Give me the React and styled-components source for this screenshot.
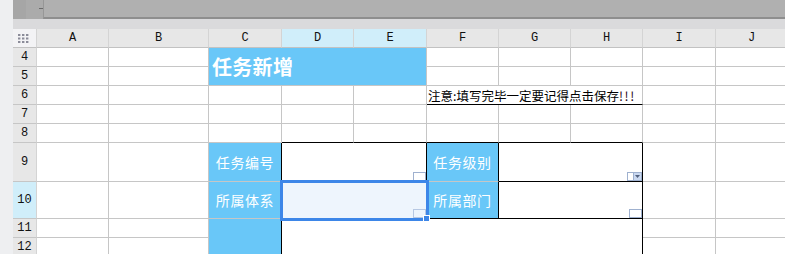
import React from 'react'
import styled, { createGlobalStyle } from 'styled-components'

const GRID = '#c6c6c6'
const INK = '#000'
const SKY = '#69c7f8'
const PICK = '#d0eefa'

const Global = createGlobalStyle`
  html, body { margin: 0; padding: 0; overflow: hidden; background: #fff; }
  body { font-family: "Noto Sans CJK SC", sans-serif; }
`

const Page = styled.div`
  display: flex;
  width: 785px;
  height: 254px;
  overflow: hidden;
`

const SideStrip = styled.div`
  width: 13px;
  flex: none;
  background: #eeeff1;
`

const Main = styled.div`
  flex: 1;
  display: flex;
  flex-direction: column;
  min-width: 0;
`

const TopBar = styled.div`
  height: 19px;
  flex: none;
  display: flex;
`

const NameBox = styled.div`
  width: 13px;
  background: #a6a6a6;
`

const FxButton = styled.div`
  width: 17px;
  background: #ababab;
  display: flex;
  justify-content: flex-end;
  padding-top: 8px;
  box-sizing: border-box;
  &::after {
    content: '';
    width: 4px;
    height: 1px;
    background: #6a6a6a;
  }
`

const FormulaBar = styled.div`
  flex: 1;
  background: #b0b0b0;
  border-left: 1px solid #979797;
  border-bottom: 2px solid #8e8e8e;
  box-sizing: border-box;
`

const Band = styled.div`
  height: 10px;
  flex: none;
  background: #dadadc;
`

const Sheet = styled.div`
  display: grid;
  grid-template-columns: 24px 72px 100px 73px 72px 73px 72px 72px 72px 73px 72px;
  grid-template-rows: 19px 19px 19px 19px 19px 19px 39px 37px 19px 19px;
`

const Cell = styled.div`
  grid-column: ${p => p.$c} / span ${p => p.$cs || 1};
  grid-row: ${p => p.$r} / span ${p => p.$rs || 1};
  box-sizing: border-box;
  border-right: 1px solid ${p => p.$rb || GRID};
  border-bottom: 1px solid ${p => p.$bb || GRID};
  background: #fff;
  min-width: 0;
`

const Corner = styled(Cell)`
  background: #f3f3f5;
  border-right-color: #d4d4d4;
  border-bottom-color: #c2c2c2;
  display: flex;
  align-items: center;
  padding-left: 5px;
`

const ColHead = styled(Cell)`
  background: ${p => (p.$on ? PICK : '#e7e7e7')};
  border-right-color: #d4d4d4;
  border-bottom-color: #c2c2c2;
  display: flex;
  align-items: center;
  justify-content: center;
  font-family: "Liberation Mono", "DejaVu Sans Mono", monospace;
  font-size: 12px;
  color: #111;
`

const RowHead = styled(ColHead)`
  border-bottom-color: ${GRID};
`

const TitleCell = styled(Cell)`
  background: ${SKY};
  color: #fff;
  font-size: 20px;
  font-weight: 700;
  display: flex;
  align-items: center;
  padding-left: 3px;
  letter-spacing: 0.3px;
`

const NoteCell = styled(Cell)`
  display: flex;
  align-items: flex-end;
  padding-left: 1px;
  font-size: 12.5px;
  line-height: 16px;
  white-space: nowrap;
  color: #000;
`

const Bang = styled.span`
  letter-spacing: 1.6px;
  color: #2a0a1a;
`

const LabelCell = styled(Cell)`
  background: ${SKY};
  color: #fff;
  font-size: 14px;
  letter-spacing: 0.6px;
  display: flex;
  align-items: center;
  justify-content: center;
`

const InputCell = styled(Cell)`
  display: flex;
  align-items: flex-end;
  justify-content: flex-end;
  position: relative;
  background: ${p => (p.$active ? '#eef5fd' : '#fff')};
  ${p => p.$active && `
    z-index: 1;
    outline: 3px solid #3d86e8;
    outline-offset: -1px;
  `}
`

const FillHandle = styled.div`
  position: absolute;
  right: -3px;
  bottom: -3px;
  width: 5px;
  height: 5px;
  background: #3d86e8;
  outline: 1px solid #fff;
`

const WidgetBox = styled.div`
  width: 13px;
  height: 9px;
  box-sizing: border-box;
  border: 1px solid ${p => (p.$soft ? '#b7c8e3' : '#9fb1cf')};
  background: transparent;
`

const Dropdown = styled.div`
  display: flex;
  height: 9px;
`

const DropBlank = styled.div`
  width: 7px;
  box-sizing: border-box;
  border: 1px solid #9fb1cf;
  background: #fff;
`

const DropArrow = styled.div`
  width: 8px;
  box-sizing: border-box;
  border: 1px solid #9fb1cf;
  border-left: none;
  background: #c9d8f0;
  display: flex;
  align-items: center;
  justify-content: center;
`

const cols = ['A', 'B', 'C', 'D', 'E', 'F', 'G', 'H', 'I', 'J']
const rows = [4, 5, 6, 7, 8, 9, 10, 11, 12]

// grid column for sheet column index (A = 1)
const gc = i => i + 1
// grid row for sheet row number
const gr = n => n - 2

function GridDots() {
  return (
    <svg width="11" height="9" viewBox="0 0 11 9">
      {[0, 4, 8].map(x =>
        [0, 3.5, 7].map(y => (
          <rect key={`${x}-${y}`} x={x} y={y} width="2.4" height="2" fill="#8b8c99" />
        ))
      )}
    </svg>
  )
}

function Specials() {
  const out = []
  const covered = new Set()
  const cover = (c, r, cs = 1, rs = 1) => {
    for (let i = c; i < c + cs; i++) for (let j = r; j < r + rs; j++) covered.add(`${i}-${j}`)
  }

  cover(3, 4, 3, 2)
  out.push(<TitleCell key="title" $c={gc(3)} $r={gr(4)} $cs={3} $rs={2}>任务新增</TitleCell>)

  cover(6, 6, 3, 1)
  out.push(
    <NoteCell key="note" $c={gc(6)} $r={gr(6)} $cs={3} $bb={INK}>
      注意:填写完毕一定要记得点击保存<Bang>!!!</Bang>
    </NoteCell>
  )

  for (let c = 4; c <= 8; c++) {
    cover(c, 8)
    out.push(<Cell key={`r8-${c}`} $c={gc(c)} $r={gr(8)} $bb={INK} />)
  }

  cover(3, 9)
  out.push(<LabelCell key="l-c9" $c={gc(3)} $r={gr(9)} $rb={INK}>任务编号</LabelCell>)
  cover(3, 10)
  out.push(<LabelCell key="l-c10" $c={gc(3)} $r={gr(10)} $rb={INK}>所属体系</LabelCell>)
  cover(3, 11, 1, 2)
  out.push(<LabelCell key="l-c11" $c={gc(3)} $r={gr(11)} $rs={2} $rb={INK} />)

  cover(4, 9, 2, 1)
  out.push(
    <InputCell key="in-d9" $c={gc(4)} $r={gr(9)} $cs={2} $rb={INK} $bb={INK}>
      <WidgetBox />
    </InputCell>
  )
  cover(6, 9)
  out.push(<LabelCell key="l-f9" $c={gc(6)} $r={gr(9)} $rb={INK}>任务级别</LabelCell>)
  cover(7, 9, 2, 1)
  out.push(
    <InputCell key="in-g9" $c={gc(7)} $r={gr(9)} $cs={2} $rb={INK} $bb={INK}>
      <Dropdown>
        <DropBlank />
        <DropArrow>
          <svg width="5" height="3" viewBox="0 0 5 3">
            <path d="M0 0h5L2.5 3z" fill="#52617e" />
          </svg>
        </DropArrow>
      </Dropdown>
    </InputCell>
  )

  cover(4, 10, 2, 1)
  out.push(
    <InputCell key="in-d10" $c={gc(4)} $r={gr(10)} $cs={2} $rb={INK} $bb={INK} $active>
      <WidgetBox $soft />
      <FillHandle />
    </InputCell>
  )
  cover(6, 10)
  out.push(<LabelCell key="l-f10" $c={gc(6)} $r={gr(10)} $rb={INK} $bb={INK}>所属部门</LabelCell>)
  cover(7, 10, 2, 1)
  out.push(
    <InputCell key="in-g10" $c={gc(7)} $r={gr(10)} $cs={2} $rb={INK} $bb={INK}>
      <WidgetBox />
    </InputCell>
  )

  cover(4, 11, 5, 2)
  out.push(<Cell key="memo" $c={gc(4)} $r={gr(11)} $cs={5} $rs={2} $rb={INK} />)

  return { out, covered }
}

export default function App() {
  const { out, covered } = Specials()

  return (
    <Page>
      <Global />
      <SideStrip />
      <Main>
        <TopBar>
          <NameBox />
          <FxButton />
          <FormulaBar />
        </TopBar>
        <Band />
        <Sheet>
          <Corner $c={1} $r={1}>
            <GridDots />
          </Corner>
          {cols.map((name, i) => (
            <ColHead key={name} $c={gc(i + 1)} $r={1} $on={name === 'D' || name === 'E'}>
              {name}
            </ColHead>
          ))}
          {rows.map(n => (
            <React.Fragment key={n}>
              <RowHead $c={1} $r={gr(n)} $on={n === 10}>{n}</RowHead>
              {cols.map((name, i) =>
                covered.has(`${i + 1}-${n}`) ? null : (
                  <Cell key={`${name}${n}`} $c={gc(i + 1)} $r={gr(n)} />
                )
              )}
            </React.Fragment>
          ))}
          {out}
        </Sheet>
      </Main>
    </Page>
  )
}
